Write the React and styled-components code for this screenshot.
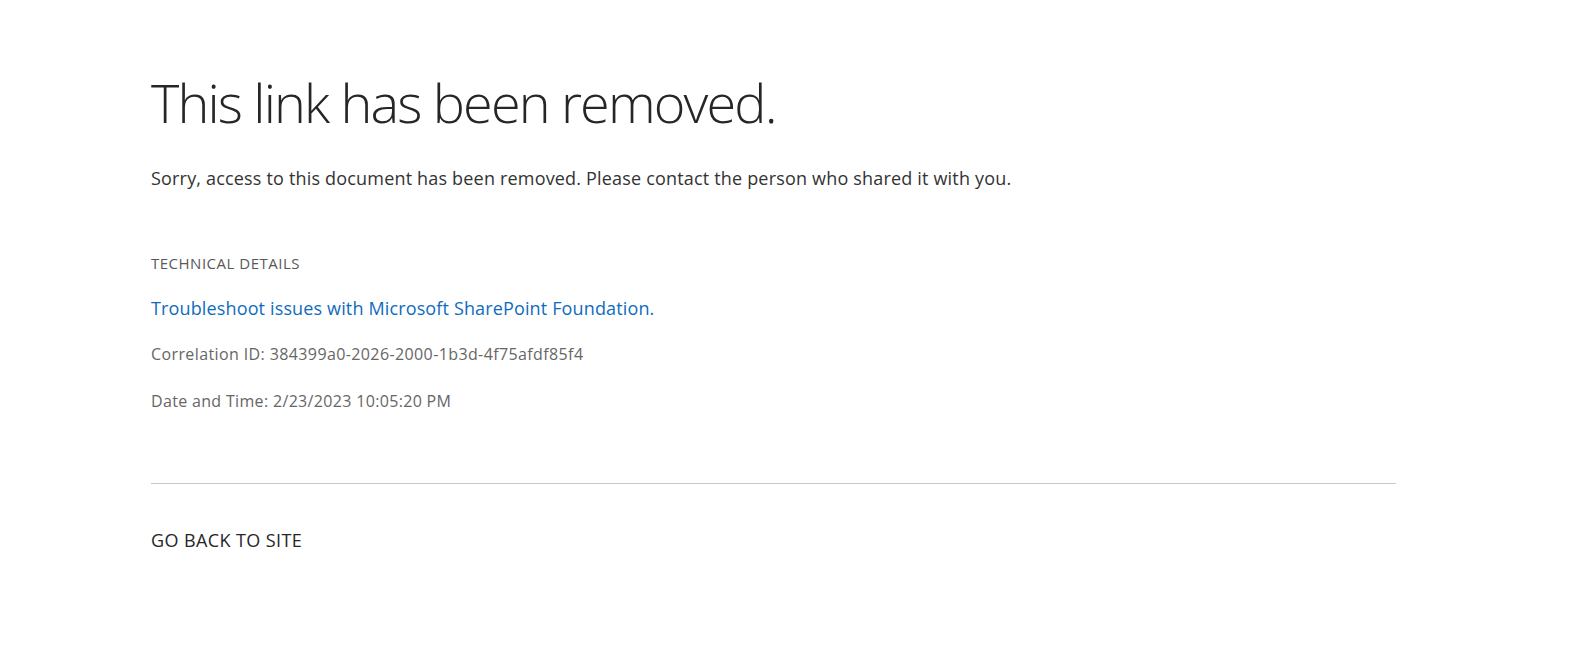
import React from 'react';
import styled, { createGlobalStyle } from 'styled-components';

const GlobalStyle = createGlobalStyle`
  html, body {
    margin: 0;
    padding: 0;
    background: #ffffff;
  }
  body {
    font-family: "Open Sans", "Noto Sans", "Liberation Sans", sans-serif;
    color: #333333;
  }
`;

const Page = styled.main`
  display: flex;
  flex-direction: column;
  padding: 66px 0 0 151px;
  width: 1245px;
`;

const Title = styled.h1`
  margin: 0;
  font-size: 54px;
  font-weight: 300;
  line-height: 72px;
  letter-spacing: -1.85px;
  color: #262626;
`;

const Message = styled.p`
  margin: 28px 0 0;
  font-size: 18px;
  line-height: 24px;
  letter-spacing: 0.18px;
  color: #333333;
`;

const Section = styled.section`
  display: flex;
  flex-direction: column;
  margin-top: 63px;
`;

const Label = styled.div`
  font-size: 15px;
  line-height: 20px;
  letter-spacing: 0.5px;
  text-transform: uppercase;
  color: #595959;
`;

const HelpLink = styled.a`
  margin-top: 23px;
  font-size: 18px;
  line-height: 24px;
  letter-spacing: 0.14px;
  color: #0f6cbd;
  text-decoration: none;
`;

const Detail = styled.div`
  margin-top: ${(p) => p.$gap || 22}px;
  font-size: 16px;
  line-height: 24px;
  letter-spacing: ${(p) => p.$spacing || 0.35}px;
  color: #666666;
`;

const Divider = styled.hr`
  margin: 70px 0 0;
  border: none;
  border-top: 1px solid #c8c8c8;
  width: 100%;
`;

const BackLink = styled.a`
  margin-top: 44px;
  font-size: 18px;
  line-height: 24px;
  letter-spacing: 0.4px;
  text-transform: uppercase;
  color: #262626;
  text-decoration: none;
`;

export default function App() {
  return (
    <>
      <GlobalStyle />
      <Page>
        <Title>This link has been removed.</Title>
        <Message>
          Sorry, access to this document has been removed. Please contact the person who shared it with you.
        </Message>
        <Section>
          <Label>Technical Details</Label>
          <HelpLink href="#">Troubleshoot issues with Microsoft SharePoint Foundation.</HelpLink>
          <Detail $spacing={0.39}>Correlation ID: 384399a0-2026-2000-1b3d-4f75afdf85f4</Detail>
          <Detail $gap={23} $spacing={0.33}>Date and Time: 2/23/2023 10:05:20 PM</Detail>
        </Section>
        <Divider />
        <BackLink href="#">Go back to site</BackLink>
      </Page>
    </>
  );
}
